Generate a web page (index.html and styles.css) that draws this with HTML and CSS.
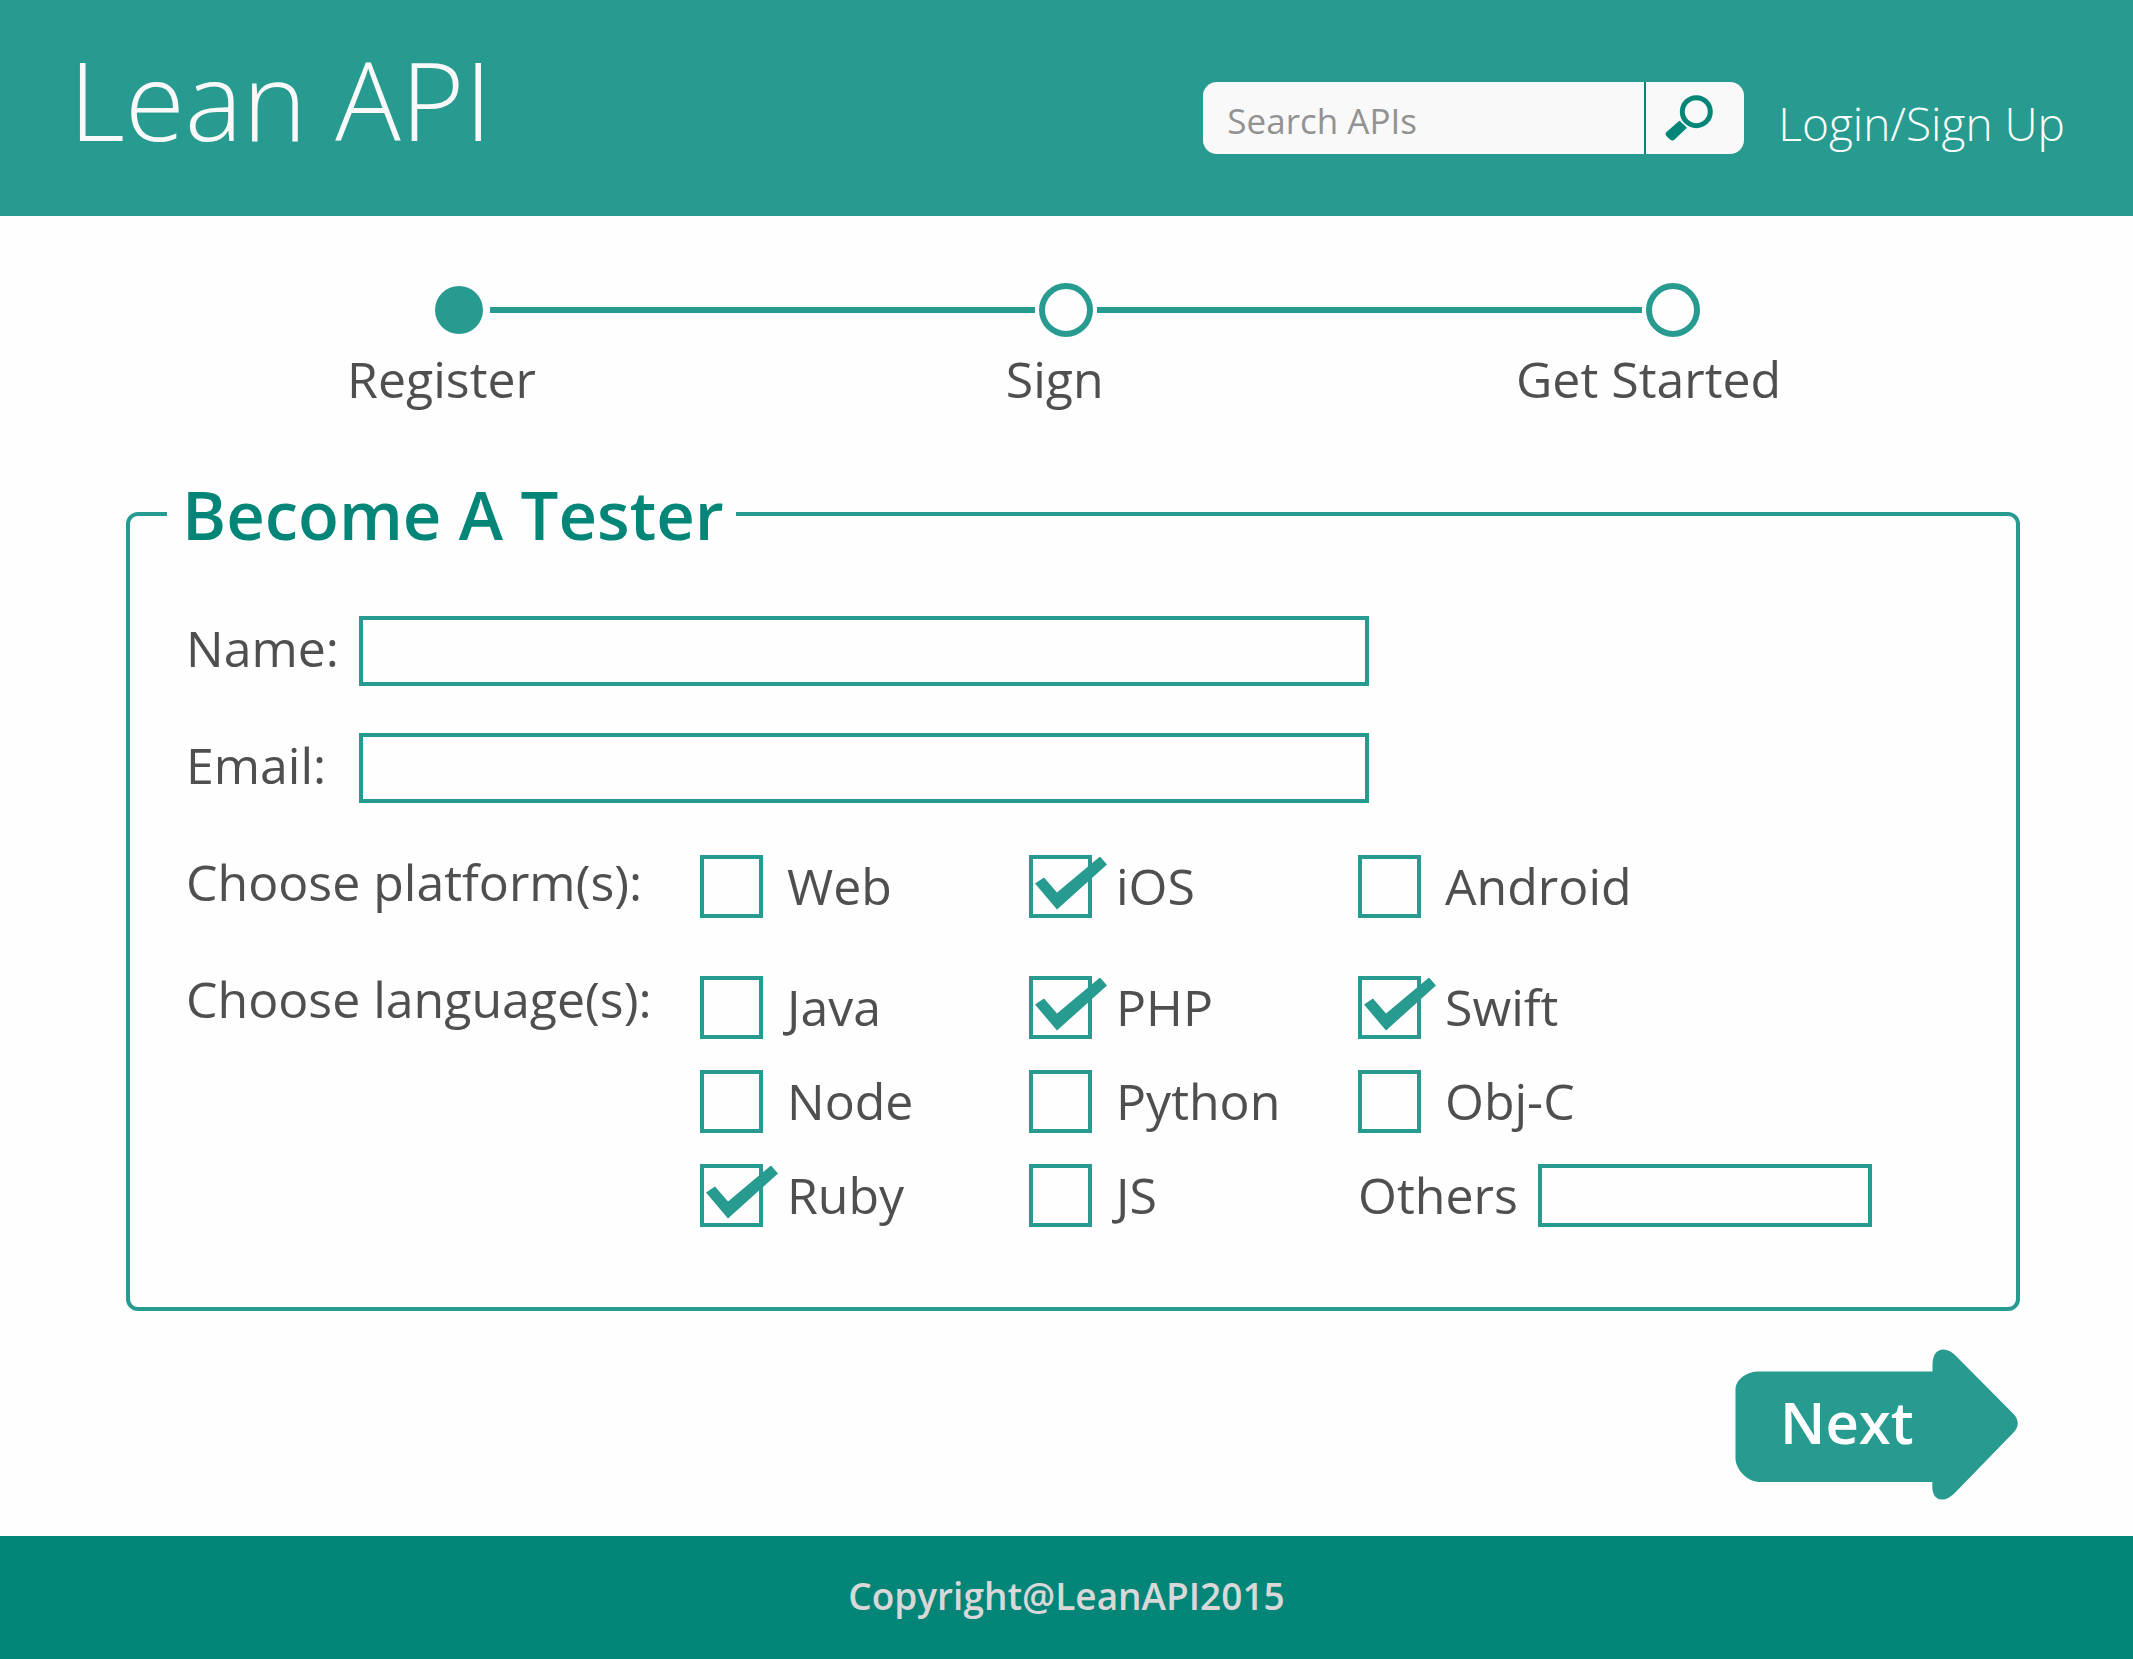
FILE: index.html
```html
<!DOCTYPE html>
<html lang="en">
<head>
<meta charset="utf-8">
<meta name="viewport" content="width=device-width, initial-scale=1">
<title>Lean API</title>
<link rel="stylesheet" href="styles.css">
</head>
<body>
<header class="header">
  <h1 class="logo">Lean API</h1>
  <form class="search" role="search">
    <input class="search-input" type="search" placeholder="Search APIs" aria-label="Search APIs">
    <button class="search-button" type="submit" aria-label="Search">
      <svg width="48" height="48" viewBox="0 0 48 48" aria-hidden="true">
        <circle cx="31.3" cy="17.7" r="14" fill="none" stroke="currentColor" stroke-width="5"/>
        <path d="M14.4 27.9 L20.6 33.8 L8.6 45 Q7.2 46.2 5.8 44.8 L2.2 41.4 Q.9 39.9 2.4 38.6 Z" fill="currentColor" stroke="currentColor" stroke-width="2" stroke-linejoin="round"/>
      </svg>
    </button>
  </form>
  <a class="login" href="#">Login/Sign Up</a>
</header>

<main class="main">
  <div class="track" aria-hidden="true">
    <span class="node node-current"></span>
    <span class="line"></span>
    <span class="node"></span>
    <span class="line"></span>
    <span class="node"></span>
  </div>
  <ol class="steps">
    <li aria-current="step">Register</li>
    <li>Sign</li>
    <li>Get Started</li>
  </ol>

  <form class="tester">
    <fieldset class="panel">
      <legend>Become A Tester</legend>
      <div class="rows">
        <div class="row">
          <label class="field-label" for="name">Name:</label>
          <input class="box field" id="name" type="text">
        </div>
        <div class="row">
          <label class="field-label" for="email">Email:</label>
          <input class="box field" id="email" type="email">
        </div>
        <div class="row" role="group" aria-labelledby="platforms">
          <span class="group-label" id="platforms">Choose platform(s):</span>
          <div class="choices">
            <label class="choice"><input class="box check" type="checkbox">Web</label>
            <label class="choice"><input class="box check" type="checkbox" checked>iOS</label>
            <label class="choice"><input class="box check" type="checkbox">Android</label>
          </div>
        </div>
        <div class="row" role="group" aria-labelledby="languages">
          <span class="group-label" id="languages">Choose language(s):</span>
          <div class="choices choices-multiline">
            <label class="choice"><input class="box check" type="checkbox">Java</label>
            <label class="choice"><input class="box check" type="checkbox" checked>PHP</label>
            <label class="choice"><input class="box check" type="checkbox" checked>Swift</label>
            <label class="choice"><input class="box check" type="checkbox">Node</label>
            <label class="choice"><input class="box check" type="checkbox">Python</label>
            <label class="choice"><input class="box check" type="checkbox">Obj-C</label>
            <label class="choice"><input class="box check" type="checkbox" checked>Ruby</label>
            <label class="choice"><input class="box check" type="checkbox">JS</label>
            <label class="choice choice-text">Others<input class="box others" type="text"></label>
          </div>
        </div>
      </div>
    </fieldset>
    <button class="next" type="submit">
      <svg class="next-shape" viewBox="0 0 283 151" aria-hidden="true">
        <path d="M22 22.5 H197.5 V15 C198 5 202 .7 208.3 .5 C213 .5 217 3 221 7 L278.3 64.7 C284.2 70.5 284.2 78 278.3 83.7 L220 143.7 C215 148.5 211 150.5 207 150.5 C201 150.5 197.3 146 197.3 137 V133 H23 C11 131.500 1 120 .5 110 V39 C1.500 30 12 23 22 22.500 Z" fill="currentColor"/>
      </svg>
      <span class="next-text">Next</span>
    </button>
  </form>
</main>

<footer class="footer">Copyright@LeanAPI2015</footer>
</body>
</html>
```
FILE: styles.css
```css
:root {
  --teal: #289b90;
  --teal-dark: #038678;
  --ink: #4f4f51;
  --paper: #f9f9f9;
}

* {
  box-sizing: border-box;
}

body {
  display: flex;
  flex-direction: column;
  min-height: 100vh;
  margin: 0;
  background: #fefefe;
  color: var(--ink);
  font: 400 50px/64px "Open Sans", "Noto Sans", sans-serif;
}

button,
input {
  margin: 0;
  border: 0;
  border-radius: 0;
  padding: 0;
  background: none;
  color: inherit;
  font: inherit;
}

/* Header */
.header {
  display: flex;
  align-items: baseline;
  min-height: 216px;
  padding: 24px 68px 0 69px;
  background: var(--teal);
}

.logo {
  margin: 0 auto 0 0;
  color: var(--paper);
  font-size: 109px;
  font-weight: 300;
  line-height: 150px;
  white-space: nowrap;
}

.search {
  display: flex;
  flex: 0 1 541px;
  align-self: flex-start;
  min-width: 0;
  height: 72px;
  margin: 58px 34px 0 24px;
  border-radius: 14px;
  background: var(--paper);
}

.search-input {
  flex: 1;
  min-width: 0;
  padding: 6px 24px 0;
  font-size: 35px;
  font-weight: 500;
  line-height: 48px;
  appearance: none;
}

.search-input::placeholder {
  color: #929292;
  opacity: 1;
}

.search-button {
  display: flex;
  align-items: center;
  width: 100px;
  border-left: 2px solid var(--teal-dark);
  padding-left: 19px;
  color: var(--teal-dark);
}

.login {
  color: #fff;
  font-size: 46px;
  font-weight: 300;
  text-decoration: none;
  white-space: nowrap;
}

/* Progress */
.main {
  flex: 1;
  padding: 67px 113px 36px 126px;
}

.track {
  display: flex;
  align-items: center;
  margin: 0 320px 0 306px;
}

.node {
  width: 54px;
  height: 54px;
  border: 6px solid var(--teal);
  border-radius: 50%;
}

.node-current {
  border: 3px solid transparent;
  background: var(--teal) padding-box;
}

.line {
  flex: 1;
  height: 6px;
  margin: 0 4px;
  background: var(--teal);
}

.steps {
  display: grid;
  grid-template-columns: 16fr 16fr 15fr;
  margin: 10px 84px 57px 9px;
  padding: 0;
  list-style: none;
  text-align: center;
}

/* Form */
.panel {
  min-width: 0;
  margin: 0;
  border: 4px solid var(--teal);
  border-radius: 12px;
  padding: 56px 37px 80px;
}

.panel legend {
  padding: 0 12px 0 15px;
  color: var(--teal-dark);
  font-size: 67px;
  font-weight: 600;
  line-height: 92px;
}

.rows {
  display: grid;
  gap: 47px;
  padding-left: 19px;
}

.row {
  display: flex;
  align-items: flex-start;
  min-height: 70px;
}

.field-label {
  width: 173px;
}

.group-label {
  width: 514px;
}

.box {
  border: 4px solid var(--teal);
}

.field {
  flex: 0 1 1010px;
  min-width: 0;
  height: 70px;
  padding: 0 16px;
}

.choices {
  display: grid;
  grid-template-columns: 329px 329px auto;
  row-gap: 30px;
  padding-top: 4px;
}

.choices-multiline {
  padding-top: 8px;
}

.choice {
  display: flex;
  align-items: center;
  gap: 24px;
}

.choice-text {
  gap: 20px;
}

.check {
  position: relative;
  flex: none;
  width: 63px;
  height: 63px;
  appearance: none;
}

/* Tick mark, drawn over the corner of its box */
.check:checked::before {
  content: "";
  position: absolute;
  top: -2px;
  left: 1px;
  width: 74px;
  height: 54px;
  background: var(--teal);
  clip-path: polygon(1px 27px, 10px 21px, 23px 36px, 66px 0, 73px 8px, 23px 53px);
}

.others {
  width: 334px;
  height: 63px;
  padding: 0 12px;
}

.next {
  display: grid;
  width: 283px;
  margin: 38px 2px 0 auto;
  color: var(--teal);
}

.next-shape,
.next-text {
  grid-area: 1 / 1;
}

.next-text {
  align-self: center;
  padding: 0 0 5px 45px;
  color: #fff;
  font-size: 58px;
  font-weight: 600;
  text-align: left;
}

/* Footer */
.footer {
  padding: 35px 24px 38px;
  background: var(--teal-dark);
  color: #d8d8d8;
  font-size: 37px;
  font-weight: 600;
  line-height: 50px;
  text-align: center;
}
```
